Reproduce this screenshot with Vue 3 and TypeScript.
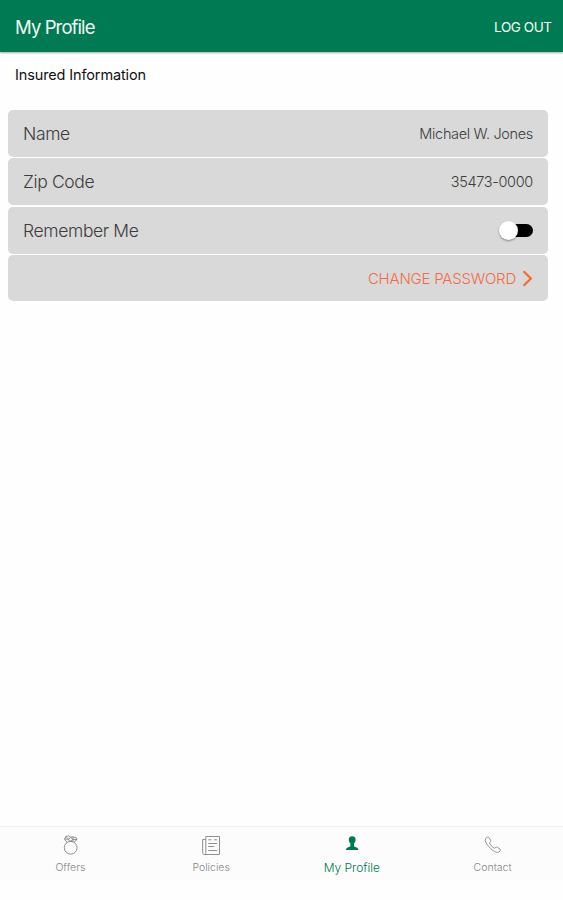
<script setup lang="ts">
import { ref } from 'vue'

type Tab = 'offers' | 'policies' | 'profile' | 'contact'

const tabs: { id: Tab; label: string }[] = [
  { id: 'offers', label: 'Offers' },
  { id: 'policies', label: 'Policies' },
  { id: 'profile', label: 'My Profile' },
  { id: 'contact', label: 'Contact' },
]
const active = ref<Tab>('profile')
const remember = ref(false)
</script>

<template>
  <div class="screen">
    <header class="bar">
      <h1 class="title">My Profile</h1>
      <button class="logout" type="button">LOG OUT</button>
    </header>

    <main class="content">
      <h2 class="section">Insured Information</h2>
      <div class="rows">
        <div class="row">
          <span class="label">Name</span>
          <span class="value">Michael W. Jones</span>
        </div>
        <div class="row">
          <span class="label">Zip Code</span>
          <span class="value">35473-0000</span>
        </div>
        <div class="row">
          <span class="label">Remember Me</span>
          <button
            class="switch"
            :class="{ on: remember }"
            type="button"
            role="switch"
            :aria-checked="remember"
            @click="remember = !remember"
          >
            <span class="knob"></span>
          </button>
        </div>
        <div class="row last">
          <button class="change" type="button">
            <span>CHANGE PASSWORD</span>
            <svg width="11" height="17" viewBox="0 0 11 17" fill="none" stroke="#f36b2c" stroke-width="2.2">
              <path d="M1.6 1.3 8.9 8.5 1.6 15.7" />
            </svg>
          </button>
        </div>
      </div>
    </main>

    <nav class="tabs">
      <button
        v-for="tab in tabs"
        :key="tab.id"
        class="tab"
        :class="{ active: active === tab.id }"
        type="button"
        @click="active = tab.id"
      >
        <svg class="icon" width="20" height="22" viewBox="0 0 20 22" fill="none" stroke="currentColor">
          <template v-if="tab.id === 'offers'">
            <circle cx="10.700" cy="13.700" r="6.400" />
            <path d="M7 8.500 4.500 5 5.900 2.400l2.700-.6 2.300 1.500 2.300-.4 3.200 1 .6 1.600-3.200 3M4.500 5l4 .2 2.400-1.900 2 2.300 4.100-.1M8.500 5.200l1.200 2.400 3.200-2 .1 2.200M5.900 2.400l2.600 2.800M13.200 2.900l-.3 2.700" />
          </template>
          <template v-else-if="tab.id === 'policies'">
            <path d="M4.800 2.500h13.700v18H3.600c-1.500 0-2-.7-2-1.800V5.500h3.200M4.800 2.500v16c0 1.200-.4 1.800-1.200 2" />
            <path d="M7.200 5.800h3.300M13 5.800h3M7.200 9.500h8.800M7.200 12.500h6M7.200 16.500h8.800" />
          </template>
          <template v-else-if="tab.id === 'profile'">
            <path
              fill="currentColor"
              stroke="none"
              d="M10.200 2.200C7.900 2.200 6.700 3.600 6.800 5.800c.1 1.700.7 3 1.600 3.800v2.500c-.3 1.200-4.300.9-4.500 4h12.600c-.2-3.100-4.200-2.800-4.500-4V9.600c.9-.8 1.500-2.100 1.600-3.800.1-2.200-1.100-3.600-3.400-3.600Z"
            />
          </template>
          <template v-else>
            <path d="M3.300 3.700c1-.8 1.800-1 2.600-.1l1.700 2.700c.6 1-.1 1.800-1.100 2.600 1 2.300 2.900 4.300 5.100 5.400.9-1 1.700-1.700 2.700-1l2.700 1.800c.8.700.4 1.700-.6 2.600-2 1.600-5.300.1-8.600-3S2.400 8.400 2.300 6.300c0-1.100.3-2 1-2.600Z" />
          </template>
        </svg>
        <span class="caption">{{ tab.label }}</span>
      </button>
    </nav>
  </div>
</template>

<style>
body {
  background: #fefefe;
}
</style>

<style scoped>
.screen {
  display: flex;
  flex-direction: column;
  box-sizing: border-box;
  height: 900px;
  padding-bottom: 20px;
  background: #fefefe;
  font-family: Inter, 'Liberation Sans', sans-serif;
  font-weight: 300;
}

button {
  padding: 0;
  border: 0;
  background: none;
  font: inherit;
  color: inherit;
}

.bar {
  display: flex;
  flex: none;
  align-items: center;
  justify-content: space-between;
  box-sizing: border-box;
  height: 52px;
  padding: 2px 12px 0 15px;
  background: #007a53;
  box-shadow: 0 1px 2px rgb(0 0 0 / 35%);
  color: #f4faf5;
}

.title {
  margin: 0;
  font-size: 18.5px;
  font-weight: 400;
  letter-spacing: -0.9px;
}

.logout {
  margin-right: -0.5px;
  font-size: 13.5px;
  font-weight: 400;
  letter-spacing: -0.45px;
}

.content {
  flex: 1;
}

.section {
  margin: 0 15px;
  padding-top: 13px;
  color: #111;
  font-size: 14.5px;
  font-weight: 400;
  line-height: 20px;
  letter-spacing: -0.13px;
}

.rows {
  display: flex;
  flex-direction: column;
  gap: 1.6px;
  margin: 24.5px 15px 0 8px;
}

.row {
  display: flex;
  align-items: center;
  justify-content: space-between;
  height: 47px;
  padding: 0 15px;
  border-radius: 5px;
  background: #d9d9d9;
  color: #3c3c3c;
}

.row.last {
  justify-content: flex-end;
  height: 45.5px;
}

.label {
  font-size: 17.5px;
  letter-spacing: -0.36px;
}

.value {
  font-size: 14.5px;
  letter-spacing: -0.33px;
}

.switch {
  display: flex;
  align-items: center;
  width: 31px;
  height: 13px;
  border-radius: 7px;
  background: #000;
}

.knob {
  flex: none;
  width: 19px;
  height: 19px;
  margin-left: -3px;
  border-radius: 50%;
  background: #fff;
  box-shadow: 0 1px 2px rgb(0 0 0 / 40%);
}

.switch.on .knob {
  margin-left: 15px;
}

.change {
  display: flex;
  align-items: center;
  gap: 6px;
  color: #f36b45;
  font-size: 15px;
  letter-spacing: -0.22px;
}

.tabs {
  display: grid;
  grid-template-columns: repeat(4, 1fr);
  flex: none;
  box-sizing: border-box;
  height: 54px;
  border-top: 1px solid #f0f0f0;
  background: #fcfcfc;
  color: #858585;
}

.tab {
  display: flex;
  flex-direction: column;
  align-items: center;
  padding-top: 7px;
}

.icon {
  flex: none;
  stroke-width: 0.9;
}

.caption {
  margin-top: 4px;
  font-size: 10.5px;
  line-height: 16px;
}

.active {
  color: #007a53;
}

.active .caption {
  font-size: 12px;
}
</style>
